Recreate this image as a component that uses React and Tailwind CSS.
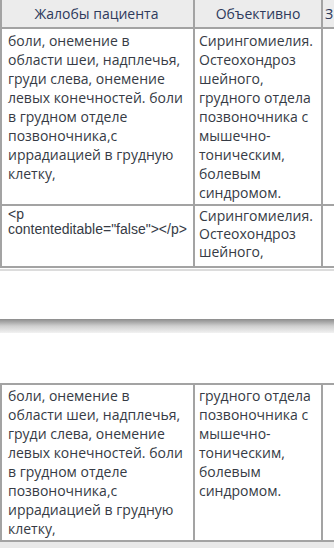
import React from 'react'

const complaint =
  'боли, онемение в области шеи, надплечья, груди слева, онемение левых конечностей. боли в грудном отделе позвоночника,с иррадиацией в грудную клетку,'

const cell = 'border-r-2 border-[#a3a3a3] overflow-hidden'

const App = () => {
  return (
    <div className="w-[334px] h-[548px] overflow-hidden bg-white text-[14px] leading-[19px] text-[#363b45] font-['Open_Sans',sans-serif]">
      {/* first page */}
      <div className="border-l-2 border-[#a3a3a3]">
        <div className="grid grid-cols-[193px_128px_1fr] h-[29px] bg-[#ececec] border-b-2 border-[#a3a3a3] text-[#2e3a5c]">
          <div className={`${cell} flex items-center justify-center pr-[2px]`}>Жалобы пациента</div>
          <div className={`${cell} flex items-center justify-center`}>Объективно</div>
          <div className="flex items-center pl-[2px] whitespace-nowrap">З</div>
        </div>
        <div className="grid grid-cols-[193px_128px_1fr] border-b-2 border-[#a3a3a3]">
          <div className={`${cell} pl-[6px] pr-[8px] pt-[2px]`}>{complaint}</div>
          <div className={`${cell} pl-[4px] pr-[4px] pt-[2px] pb-[2px]`}>
            Сирингомиелия. Остеохондроз шейного, грудного отдела позвоночника с мышечно-тоническим, болевым синдромом.
          </div>
          <div />
        </div>
        <div className="grid grid-cols-[193px_128px_1fr] h-[62px] border-b-2 border-[#a3a3a3]">
          <div className={`${cell} pl-[6px] pr-[2px] pt-[1px] font-['Liberation_Sans',sans-serif] text-[14px] leading-[15px]`}>
            &lt;p
            <br />
            <span className="whitespace-nowrap">contenteditable="false"&gt;&lt;/p&gt;</span>
          </div>
          <div className={`${cell} pl-[4px] pr-[4px] pt-[1px] leading-[18px]`}>
            Сирингомиелия. Остеохондроз шейного, грудного отдела
          </div>
          <div />
        </div>
      </div>
      <div className="mt-[1px] h-[2px] bg-[#dcdcdc]" />

      {/* page break */}
      <div className="mt-[48px] h-[14px] bg-gradient-to-b from-[#8c8c8c] via-[#cfcfcf] to-[#f2f2f2]" />

      {/* second page */}
      <div className="mt-[50px] border-l-2 border-t-2 border-[#a3a3a3]">
        <div className="grid grid-cols-[193px_128px_1fr] h-[157px] border-b-2 border-[#a3a3a3]">
          <div className={`${cell} pl-[6px] pr-[8px] pt-[1px]`}>{complaint}</div>
          <div className={`${cell} pl-[4px] pr-[4px] pt-[1px]`}>
            грудного отдела позвоночника с мышечно-тоническим, болевым синдромом.
          </div>
          <div />
        </div>
      </div>
      <div className="h-[8px] bg-[#e9e9e9]" />
    </div>
  )
}

export default App
